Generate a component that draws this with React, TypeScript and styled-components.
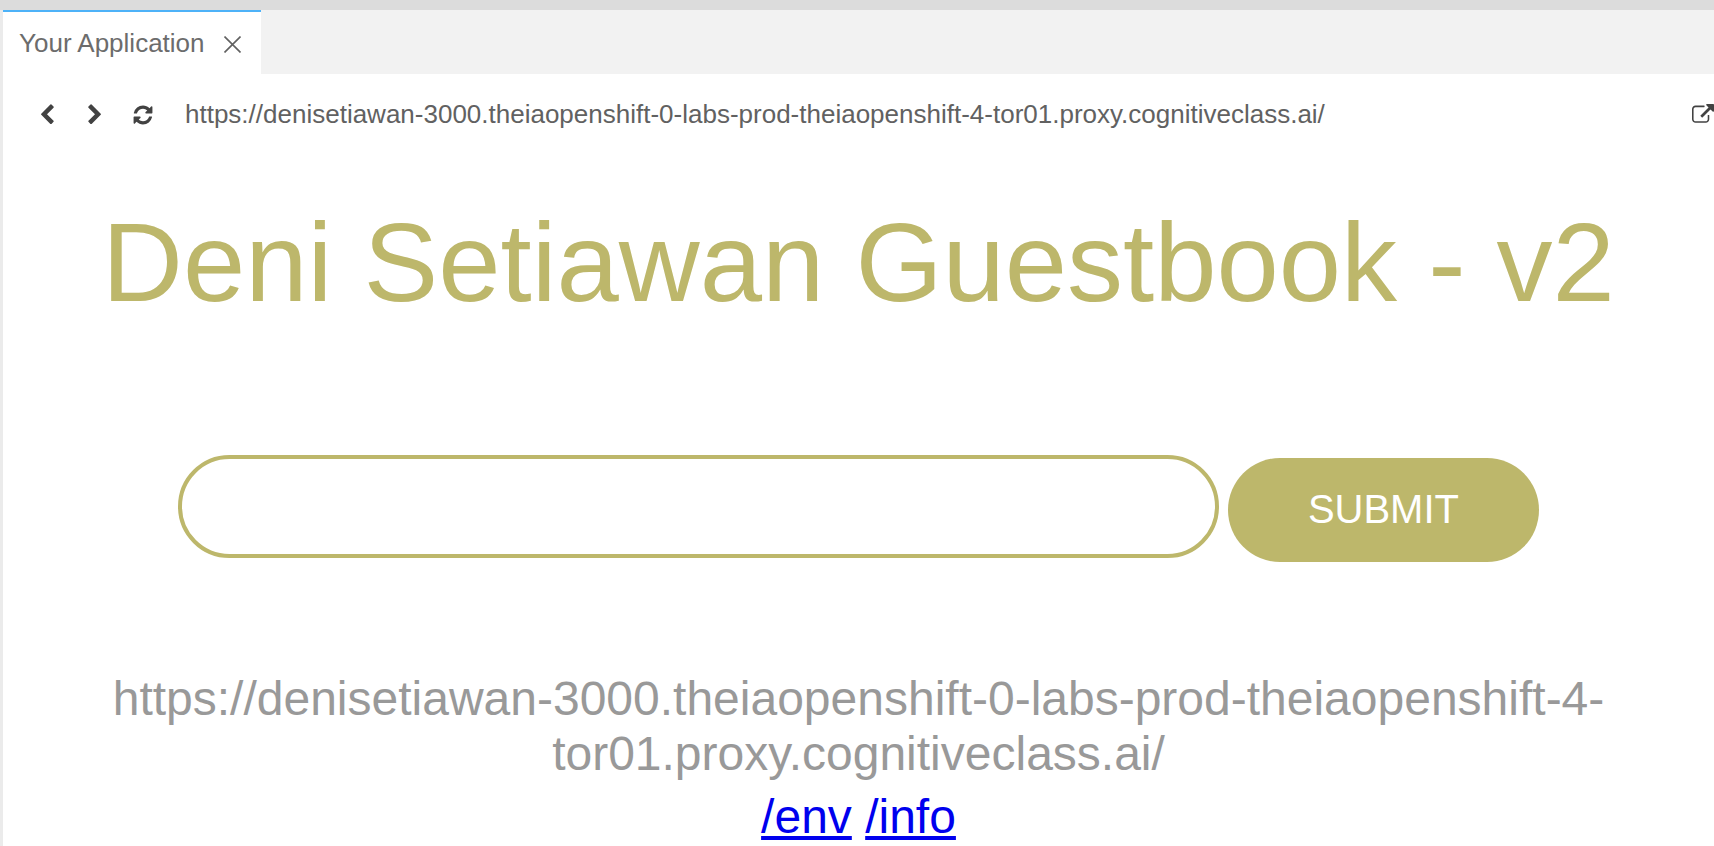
import React from "react";
import styled, { createGlobalStyle } from "styled-components";

const PAGE_URL =
  "https://denisetiawan-3000.theiaopenshift-0-labs-prod-theiaopenshift-4-tor01.proxy.cognitiveclass.ai/";

const GlobalStyle = createGlobalStyle`
  *, *::before, *::after { box-sizing: border-box; }
  body {
    margin: 0;
    background: #ffffff;
    font-family: "Liberation Sans", Arial, sans-serif;
    overflow: hidden;
  }
`;

const Workbench = styled.div`
  min-height: 100vh;
  display: flex;
  flex-direction: column;
  border-top: 10px solid #dcdcdc;
`;

const Panel = styled.div`
  flex: 1;
  display: flex;
  flex-direction: column;
  border-left: 3px solid #ebebeb;
`;

const TabBar = styled.div`
  height: 64px;
  display: flex;
  background: #f2f2f2;
`;

const Tab = styled.div`
  display: flex;
  align-items: center;
  gap: 19px;
  padding: 0 20px 0 16px;
  border-top: 2px solid #4db2f8;
  background: #ffffff;
  color: #6c6c6c;
  font-size: 26px;
  line-height: 30px;
  white-space: nowrap;
`;

const IconButton = styled.button`
  display: flex;
  padding: 2px 0 0;
  border: 0;
  background: none;
  color: #424242;
  cursor: pointer;
`;

const Toolbar = styled.div`
  height: 80px;
  display: flex;
  align-items: center;
  padding: 0 0 0 33px;
`;

const NavGroup = styled.div`
  display: flex;
  gap: 26px;
`;

const AddressInput = styled.input`
  flex: 1;
  min-width: 0;
  height: 40px;
  margin-left: 31px;
  padding: 0;
  border: 0;
  outline: 0;
  background: transparent;
  color: #616161;
  font: 26px "Liberation Sans", Arial, sans-serif;
`;

const Page = styled.main`
  display: flex;
  flex-direction: column;
  align-items: center;
  padding-top: 45px;
  text-align: center;
`;

const Title = styled.h1`
  margin: 0;
  color: #bdb76b;
  font-size: 112px;
  font-weight: 400;
  line-height: 128px;
`;

const EntryForm = styled.form`
  width: 100%;
  display: flex;
  align-items: baseline;
  gap: 9px;
  margin: 128px 0 109px;
  padding: 0 175px;
`;

const EntryInput = styled.input`
  flex: 1;
  min-width: 0;
  height: 103px;
  padding: 0 40px;
  border: 4px solid #bdb76b;
  border-radius: 52px;
  outline: 0;
  background: #ffffff;
  font: 48px "Liberation Sans", Arial, sans-serif;
`;

const SubmitButton = styled.button`
  height: 104px;
  padding: 0 80px;
  border: 0;
  border-radius: 52px;
  background: #bdb76b;
  color: #ffffff;
  font: 40px "Liberation Sans", Arial, sans-serif;
  cursor: pointer;
`;

const HostAddress = styled.p`
  margin: 0 0 8px;
  padding: 0 100px;
  color: #999999;
  font-size: 48px;
  line-height: 55px;
`;

const Links = styled.nav`
  font-size: 48px;
  line-height: 55px;
`;

const Link = styled.a`
  color: #0000ee;
  text-decoration: underline;
`;

function Glyph({ d }: { d: string }) {
  return (
    <svg width="22" height="22" viewBox="0 0 1792 1792" fill="currentColor" aria-hidden="true">
      <path d={d} />
    </svg>
  );
}

const glyphs = {
  back: "M1427 301l-531 531 531 531q19 19 19 45t-19 45l-166 166q-19 19-45 19t-45-19l-742-742q-19-19-19-45t19-45l742-742q19-19 45-19t45 19l166 166q19 19 19 45t-19 45z",
  forward:
    "M1363 877l-742 742q-19 19-45 19t-45-19l-166-166q-19-19-19-45t19-45l531-531-531-531q-19-19-19-45t19-45l166-166q19-19 45-19t45 19l742 742q19 19 19 45t-19 45z",
  refresh:
    "M1639 1056q0 5-1 7-64 268-268 434.500t-478 166.500q-146 0-282.500-55t-243.500-157l-129 129q-19 19-45 19t-45-19-19-45v-448q0-26 19-45t45-19h448q26 0 45 19t19 45-19 45l-137 137q71 66 161 102t187 36q134 0 250-65t186-179q11-17 53-117 8-23 30-23h192q13 0 22.500 9.500t9.500 22.500zm25-800v448q0 26-19 45t-45 19h-448q-26 0-45-19t-19-45 19-45l138-138q-148-137-349-137-134 0-250 65t-186 179q-11 17-53 117-8 23-30 23h-199q-13 0-22.500-9.500t-9.500-22.500v-7q65-268 270-434.500t480-166.500q146 0 284 55.500t245 156.500l130-129q19-19 45-19t45 19 19 45z",
  external:
    "M1408 928v320q0 119-84.500 203.500t-203.500 84.500h-832q-119 0-203.500-84.500t-84.500-203.500v-832q0-119 84.500-203.500t203.500-84.500h704q14 0 23 9t9 23v64q0 14-9 23t-23 9h-704q-66 0-113 47t-47 113v832q0 66 47 113t113 47h832q66 0 113-47t47-113v-320q0-14 9-23t23-9h64q14 0 23 9t9 23zm384-864v512q0 26-19 45t-45 19-45-19l-176-176-652 652q-10 10-23 10t-23-10l-114-114q-10-10-10-23t10-23l652-652-176-176q-19-19-19-45t19-45 45-19h512q26 0 45 19t19 45z",
};

export default function App() {
  return (
    <>
      <GlobalStyle />
      <Workbench>
        <Panel>
          <TabBar>
            <Tab>
              Your Application
              <IconButton aria-label="Close tab">
                <svg width="17" height="17" viewBox="0 0 17 17" stroke="#616161" strokeWidth="1.6" aria-hidden="true">
                  <path d="M0.500 0.500L16.500 16.500M16.500 0.500L0.500 16.500" />
                </svg>
              </IconButton>
            </Tab>
          </TabBar>
          <Toolbar>
            <NavGroup>
              <IconButton aria-label="Back"><Glyph d={glyphs.back} /></IconButton>
              <IconButton aria-label="Forward"><Glyph d={glyphs.forward} /></IconButton>
              <IconButton aria-label="Refresh"><Glyph d={glyphs.refresh} /></IconButton>
            </NavGroup>
            <AddressInput aria-label="Address" defaultValue={PAGE_URL} />
            <IconButton aria-label="Open in a new window"><Glyph d={glyphs.external} /></IconButton>
          </Toolbar>
          <Page>
            <Title>Deni Setiawan Guestbook - v2</Title>
            <EntryForm onSubmit={(event) => event.preventDefault()}>
              <EntryInput type="text" aria-label="Guestbook entry" />
              <SubmitButton type="submit">SUBMIT</SubmitButton>
            </EntryForm>
            <HostAddress>{PAGE_URL}</HostAddress>
            <Links>
              <Link href="/env">/env</Link> <Link href="/info">/info</Link>
            </Links>
          </Page>
        </Panel>
      </Workbench>
    </>
  );
}
